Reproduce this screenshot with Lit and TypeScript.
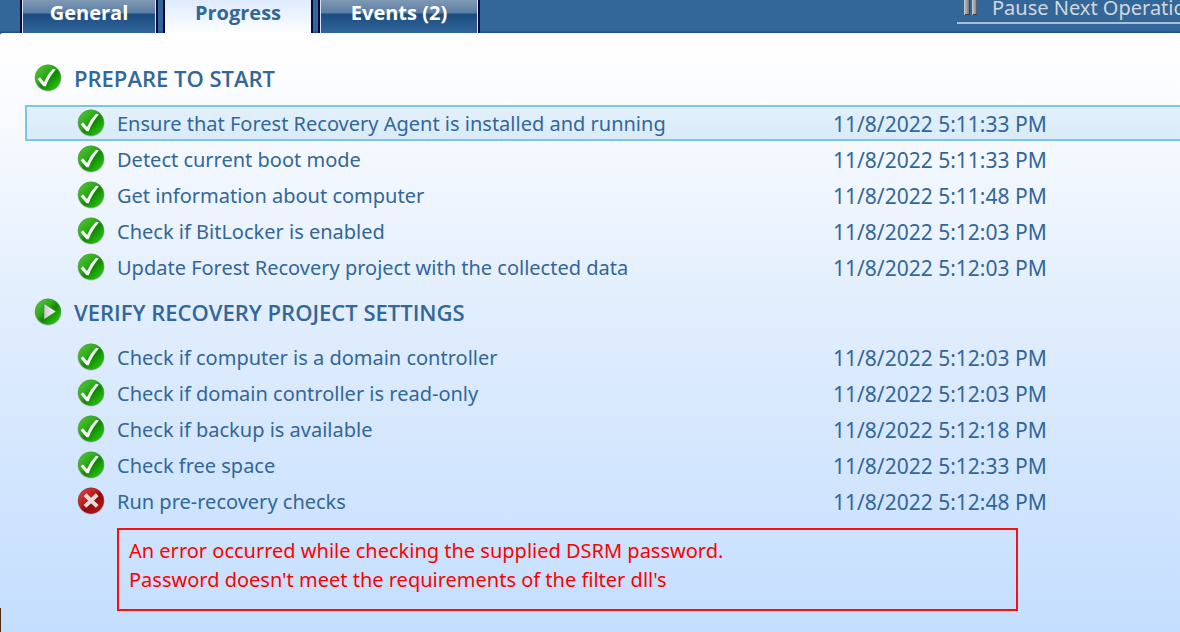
import { LitElement, html, css, svg } from "lit";
import { customElement, property, state } from "lit/decorators.js";

type Status = "done" | "running" | "failed";

interface Step {
  name: string;
  time: string;
  status: Status;
  error?: string[];
}

interface Stage {
  title: string;
  status: Status;
  steps: Step[];
}

const stages: Stage[] = [
  {
    title: "PREPARE TO START",
    status: "done",
    steps: [
      { name: "Ensure that Forest Recovery Agent is installed and running", time: "11/8/2022 5:11:33 PM", status: "done" },
      { name: "Detect current boot mode", time: "11/8/2022 5:11:33 PM", status: "done" },
      { name: "Get information about computer", time: "11/8/2022 5:11:48 PM", status: "done" },
      { name: "Check if BitLocker is enabled", time: "11/8/2022 5:12:03 PM", status: "done" },
      { name: "Update Forest Recovery project with the collected data", time: "11/8/2022 5:12:03 PM", status: "done" },
    ],
  },
  {
    title: "VERIFY RECOVERY PROJECT SETTINGS",
    status: "running",
    steps: [
      { name: "Check if computer is a domain controller", time: "11/8/2022 5:12:03 PM", status: "done" },
      { name: "Check if domain controller is read-only", time: "11/8/2022 5:12:03 PM", status: "done" },
      { name: "Check if backup is available", time: "11/8/2022 5:12:18 PM", status: "done" },
      { name: "Check free space", time: "11/8/2022 5:12:33 PM", status: "done" },
      {
        name: "Run pre-recovery checks",
        time: "11/8/2022 5:12:48 PM",
        status: "failed",
        error: [
          "An error occurred while checking the supplied DSRM password.",
          "Password doesn't meet the requirements of the filter dll's",
        ],
      },
    ],
  },
];

@customElement("status-icon")
export class StatusIcon extends LitElement {
  @property() status: Status = "done";

  static styles = css`
    :host { display: block; width: 28px; height: 28px; }
    svg { display: block; width: 28px; height: 28px; }
  `;

  private glyph() {
    switch (this.status) {
      case "running":
        return svg`<path d="M10 5.4 L22 13.6 L10 21.6 Z" fill="url(#glyph)" stroke="#2d8a1c" stroke-width=".5"/>`;
      case "failed":
        return svg`<path d="M8 7.8 L20.2 19.4 M20.2 7.8 L8 19.4" stroke="#e2dddd" stroke-width="4" fill="none"/>`;
      default:
        return svg`<path d="M3.6 15.2 L6 13.2 L10 18 Q13.6 10 19 4.8 L21.8 5.6 Q15.2 13 11.8 22.2 L9.4 22.2 Z" fill="#f4f7f3"/>`;
    }
  }

  render() {
    const failed = this.status === "failed";
    return html`<svg viewBox="0 0 28 28" aria-hidden="true">
      <defs>
        <linearGradient id="body" x1="0" y1="0" x2="1" y2="1">
          <stop offset="0" stop-color=${failed ? "#d8504c" : "#5cc93c"} />
          <stop offset=".42" stop-color=${failed ? "#bb1c1c" : "#2ba818"} />
          <stop offset=".55" stop-color=${failed ? "#98090b" : "#118604"} />
          <stop offset="1" stop-color=${failed ? "#b91d1a" : "#30dc10"} />
        </linearGradient>
        <linearGradient id="glyph" x1="0" y1="0" x2="1" y2="0">
          <stop offset="0" stop-color="#c8c8cc" />
          <stop offset="1" stop-color="#ffffff" />
        </linearGradient>
        <radialGradient id="shadow">
          <stop offset=".86" stop-color="#76807c" stop-opacity=".7" />
          <stop offset="1" stop-color="#8f9a98" stop-opacity="0" />
        </radialGradient>
      </defs>
      <circle cx="14" cy="14.2" r="14" fill="url(#shadow)" />
      <circle cx="14" cy="13.6" r="12.8" fill="url(#body)" stroke=${failed ? "#8c2424" : "#3d9a32"} stroke-width=".5" />
      ${this.glyph()}
    </svg>`;
  }
}

@customElement("app-root")
export class AppRoot extends LitElement {
  @state() private activeTab = "Progress";
  @state() private selected = stages[0].steps[0];

  static styles = css`
    :host {
      display: block;
      min-height: 100vh;
      background: #336699;
      font-family: "Noto Sans", "Open Sans", sans-serif;
      font-size: 20px;
      line-height: 34px;
      color: #336699;
    }
    * { box-sizing: border-box; }
    .page { display: flex; flex-direction: column; min-height: 100vh; position: relative; overflow: hidden; }
    .bar {
      display: flex;
      align-items: flex-start;
      justify-content: space-between;
      height: 33px;
      padding-left: 20px;
      background: linear-gradient(#336699 31px, #1f4f88 32px);
    }
    .tabs { display: flex; gap: 5px; height: 33px; }
    .tab {
      width: 138px;
      height: 33px;
      padding: 0 0 8px;
      border: 2px solid #00093f;
      border-width: 0 2px;
      font: 700 20px/25px "Open Sans", sans-serif;
      color: #fff;
      background: linear-gradient(#8099b4 0, #5a7da4 13px, #1b4c80 14px, #2f6499 32px);
      box-shadow: inset 1px 0 #dbe5f0, inset -1px 0 #dbe5f0;
      white-space: nowrap;
    }
    .tab.wide { width: 162px; }
    .tab.active {
      width: 150px;
      color: #336699;
      background: linear-gradient(#deebfe, #fdfeff);
      box-shadow: none;
    }
    .action {
      display: flex;
      align-items: center;
      gap: 15px;
      flex: 0 0 223px;
      height: 24px;
      padding: 0 0 7px 7px;
      border: 0;
      border-bottom: 2px solid #a9bfd5;
      background: none;
      overflow: hidden;
      font: 20px/16px "Noto Sans", sans-serif;
      color: #d3d7db;
      white-space: nowrap;
    }
    .action svg { flex: none; width: 13px; height: 16px; }
    .panel {
      flex: 1;
      padding: 18px 0 22px 25px;
      border-top-left-radius: 3px;
      background: linear-gradient(#ffffff, #fbfcff 10%, #e0edfd 48%, #c4deff);
    }
    .stage { display: flex; align-items: center; gap: 12px; height: 54px; margin: 0; padding-left: 9px; font: 600 22px/34px "Open Sans", sans-serif; }
    ul { list-style: none; margin: 0; padding: 0; }
    .step {
      display: grid;
      grid-template-columns: 28px minmax(0, 704px) auto;
      column-gap: 12px;
      align-items: center;
      height: 36px;
      padding-left: 51px;
      border: 1px solid transparent;
      border-right: 0;
      white-space: nowrap;
    }
    .step.selected {
      border: 2px solid #7cc4ea;
      border-right: 0;
      padding-left: 50px;
      background: linear-gradient(#e2f0fb, #d9ebf9);
    }
    .step span, .step time { line-height: 30px; padding-top: 2px; }
    .step time { font-size: 21px; }
    .error {
      max-width: 901px;
      margin: 9px 24px 0 92px;
      padding: 6px 10px 15px;
      border: 2px solid #fa1010;
      color: #ff0000;
      font-size: 20px;
      line-height: 29px;
    }
    .error p { margin: 0; }
    .edge { position: absolute; left: 0; bottom: 0; width: 1px; height: 25px; background: #4a2d14; }
  `;

  private renderTab(name: string, wide = false) {
    const active = this.activeTab === name;
    return html`<button
      class="tab ${active ? "active" : ""} ${wide ? "wide" : ""}"
      role="tab"
      aria-selected=${active}
      @click=${() => (this.activeTab = name)}
    >${name}</button>`;
  }

  private renderStep(step: Step) {
    return html`<li>
      <div class="step ${this.selected === step ? "selected" : ""}" @click=${() => (this.selected = step)}>
        <status-icon status=${step.status}></status-icon>
        <span>${step.name}</span>
        <time>${step.time}</time>
      </div>
      ${step.error
        ? html`<div class="error" role="alert">${step.error.map((line) => html`<p>${line}</p>`)}</div>`
        : null}
    </li>`;
  }

  render() {
    return html`<div class="page">
      <header class="bar">
        <div class="tabs" role="tablist">
          ${this.renderTab("General")}${this.renderTab("Progress")}${this.renderTab("Events (2)", true)}
        </div>
        <button class="action">
          <svg viewBox="0 0 13 16" aria-hidden="true">
            <defs>
              <linearGradient id="bars" x1="0" x2="1">
                <stop offset="0" stop-color="#c9c9c9" />
                <stop offset="1" stop-color="#77797c" />
              </linearGradient>
            </defs>
            <path d="M0 0H5V15H0Z" fill="url(#bars)" /><path d="M8 0H13V15H8Z" fill="url(#bars)" />
            <path d="M1 14.5H5.5V0M9 14.5H13V0" fill="none" stroke="#33414f" />
          </svg>
          Pause Next Operation
        </button>
      </header>
      <main class="panel">
        ${stages.map(
          (stage) => html`<section>
            <h2 class="stage"><status-icon status=${stage.status}></status-icon>${stage.title}</h2>
            <ul>${stage.steps.map((step) => this.renderStep(step))}</ul>
          </section>`
        )}
      </main>
      <div class="edge"></div>
    </div>`;
  }
}
